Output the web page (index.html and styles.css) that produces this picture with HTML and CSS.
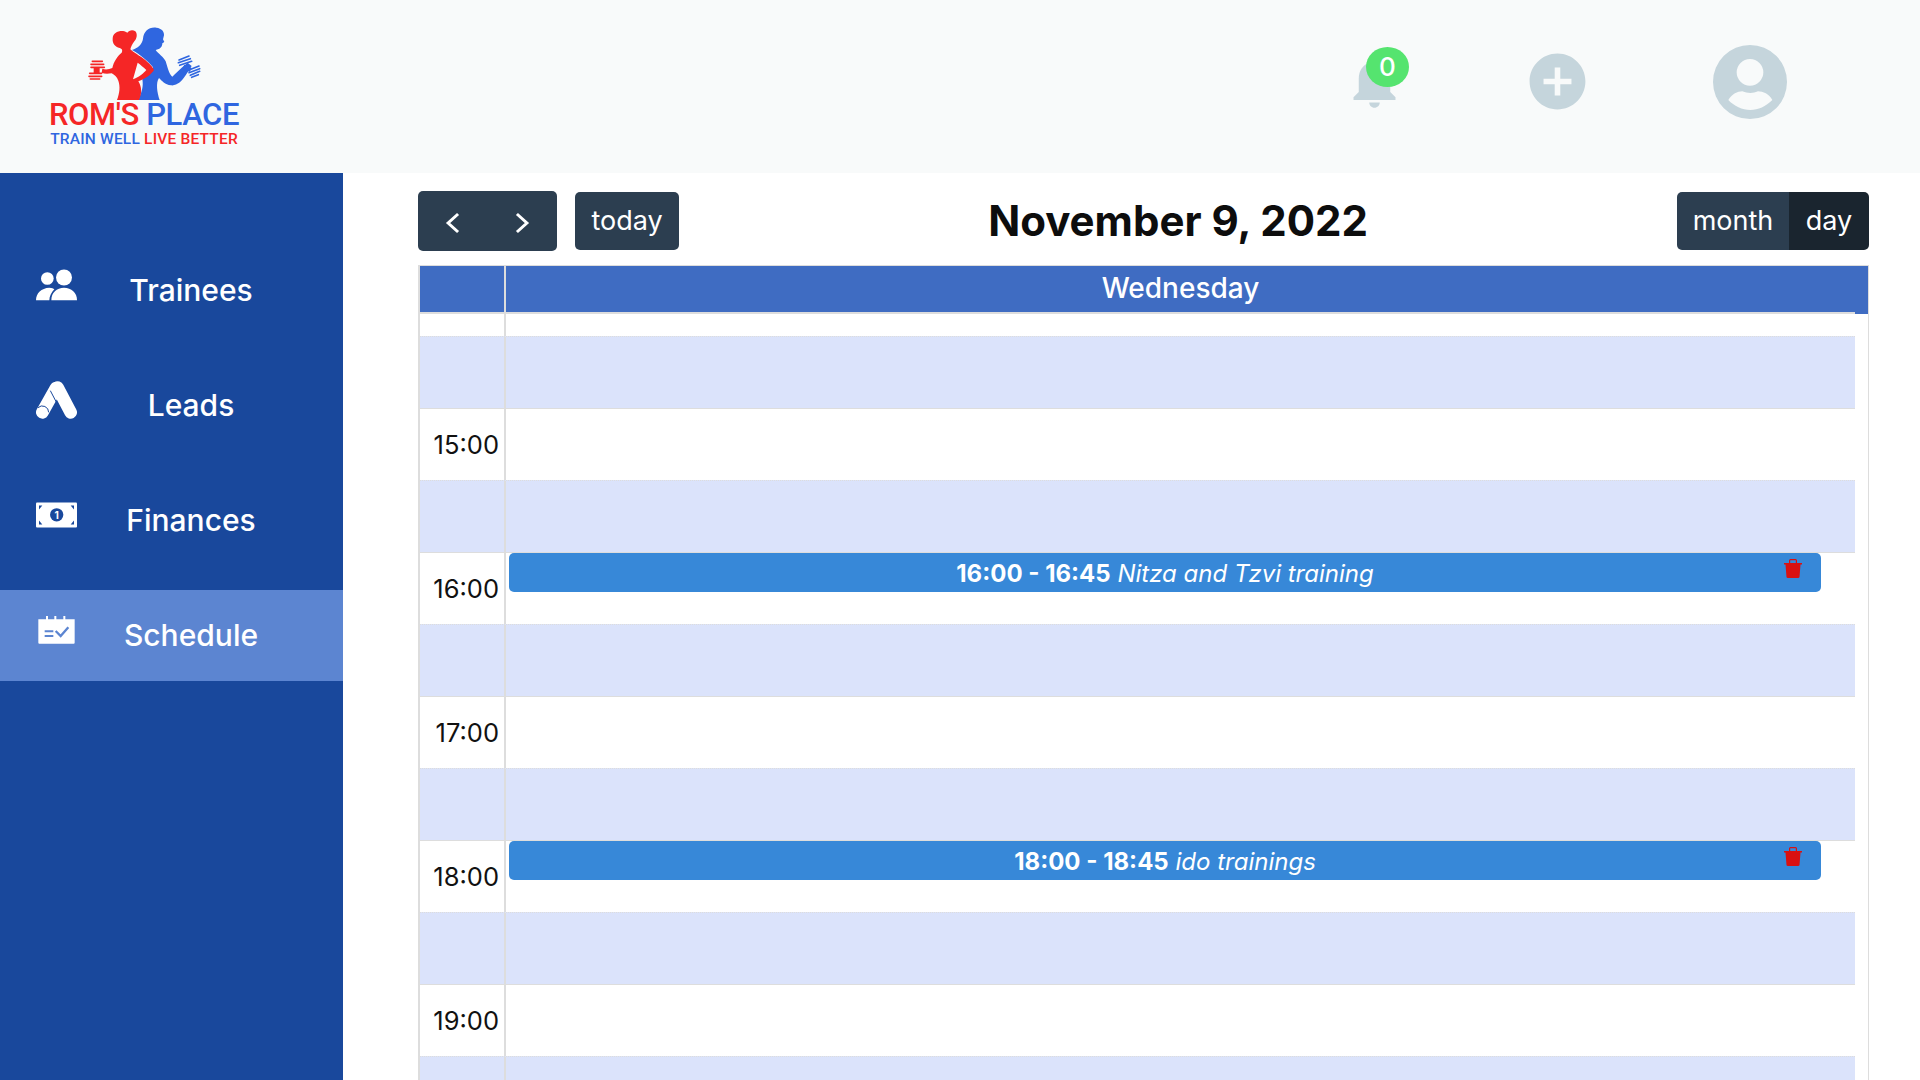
FILE: index.html
```html
<!DOCTYPE html>
<html lang="en">
<head>
    <meta charset="UTF-8">
    <title>Schedule</title>
    <link rel="stylesheet" href="styles.css">
</head>
<body>
    <header class="topbar">
        <div class="logo">
            <svg class="logo-figures" viewBox="260 80 345 225">
                <g fill="#2f66e0">
                    <path d="M395 152C412 146 425 136 428 118C430 96 446 82 468 85C484 87 492 96 491 108L488 120L492 128L486 132C486 142 480 150 466 152C474 164 490 172 496 186C502 206 508 228 516 232C526 222 536 212 544 205L562 190L574 200L556 228C544 246 530 260 512 258C494 256 484 244 476 236C466 250 470 280 478 302H414C424 280 430 262 426 240C440 222 460 216 458 204C444 186 420 166 395 152Z"/>
                    <g stroke="#2f66e0" stroke-width="5" stroke-linecap="round" fill="none">
                        <path d="M536 182L566 170M534 190L570 178M538 198L574 186"/>
                        <path d="M566 212L596 200M566 220L598 208M570 228L598 216M574 234L594 226"/>
                    </g>
                    <path d="M552 196L574 206L568 218L546 208Z"/>
                </g>
                <g fill="#f52626">
                    <path d="M337 118C337 102 352 94 368 95C374 96 378 98 381 100C386 92 398 90 405 96C412 104 410 118 402 126C396 134 392 142 390 150C396 156 412 166 424 174C440 186 456 200 461 212C452 226 436 238 414 246C424 262 426 282 416 302H350C358 280 360 262 354 244C350 232 342 226 334 222C322 224 312 224 304 220L306 208C316 212 326 210 336 206C340 186 352 170 364 160C368 152 364 148 358 146C344 142 336 132 337 118ZM412 190L398 240C414 234 430 222 438 212C430 204 420 196 412 190Z"/>
                    <g stroke="#f52626" stroke-width="5" stroke-linecap="round" fill="none">
                        <path d="M276 186H306M272 195H310M272 204H312"/>
                        <path d="M268 222H304M266 231H304M270 239H298"/>
                    </g>
                    <path d="M280 204H298V224H280Z"/>
                </g>
            </svg>
            <div class="logo-name"><span class="red">ROM'S</span> <span class="blue">PLACE</span></div>
            <div class="logo-slogan"><span class="blue">TRAIN WELL</span> <span class="red">LIVE BETTER</span></div>
        </div>
        <div class="topbar-icons">
            <div class="bell">
                <svg class="icon-bell" viewBox="0 0 24 24"><path d="M12 22c1.1 0 2-.9 2-2h-4c0 1.1.89 2 2 2zm6-6v-5c0-3.07-1.64-5.64-4.5-6.32V4c0-.83-.67-1.5-1.5-1.5s-1.5.67-1.5 1.5v.68C7.63 5.36 6 7.92 6 11v5l-2 2v1h16v-1l-2-2z"/></svg>
                <span class="badge">0</span>
            </div>
            <svg class="icon-add" viewBox="0 0 24 24"><path d="M12 2C6.48 2 2 6.48 2 12s4.48 10 10 10 10-4.48 10-10S17.52 2 12 2zm5 11h-4v4h-2v-4H7v-2h4V7h2v4h4v2z"/></svg>
            <svg class="icon-user" viewBox="1237 75 222 222"><path fill-rule="evenodd" d="M1237 186a111 111 0 1 0 222 0a111 111 0 1 0 -222 0ZM1308 157a40 40 0 1 0 80 0a40 40 0 1 0 -80 0ZM1283 240C1295 222 1310 214 1325 214C1335 217 1340 219 1349 219C1358 219 1363 217 1372 214C1387 214 1405 222 1415 240C1395 260 1373 270 1349 270C1325 270 1300 258 1283 240Z"/></svg>
        </div>
    </header>

    <div class="layout">
        <nav class="sidebar">
            <a class="nav-item">
                <svg class="nav-icon" viewBox="108 85 123 95">
                    <circle cx="142" cy="113" r="19"/>
                    <circle cx="192" cy="110" r="24"/>
                    <path d="M108 178C108 158 124 142 148 141C156 142 160 143 163 145C154 154 148 166 148 178Z"/>
                    <path d="M154 178C154 156 170 141 192 141C214 141 231 156 231 178Z"/>
                </svg>
                <span class="nav-label">Trainees</span>
            </a>
            <a class="nav-item">
                <svg class="nav-icon" viewBox="108 422 123 112">
                    <path d="M168 442L127 515" fill="none" stroke="#fff" stroke-width="38" stroke-linecap="round"/>
                    <path d="M173 441L212 515" fill="none" stroke="#fff" stroke-width="38" stroke-linecap="round"/>
                    <path d="M151 450L174 494" fill="none" stroke="#19489c" stroke-width="3"/>
                    <path d="M114 501A19 19 0 0 1 146 515" fill="none" stroke="#19489c" stroke-width="3"/>
                </svg>
                <span class="nav-label">Leads</span>
            </a>
            <a class="nav-item">
                <svg class="nav-icon" viewBox="108 96 123 75">
                    <rect x="108" y="96" width="123" height="75" rx="3"/>
                    <circle cx="170" cy="133" r="20" fill="#19489c"/>
                    <text class="bill-digit" x="170" y="144">1</text>
                    <path d="M117 105h10l-10 12zM222 105h-10l10 12zM117 162h10l-10-12zM222 162h-10l10-12z" fill="#19489c"/>
                </svg>
                <span class="nav-label">Finances</span>
            </a>
            <a class="nav-item active">
                <svg class="nav-icon icon-schedule" viewBox="108 438 123 84">
                    <path d="M115 448H138V438H144V448H163V438H169V448H190V438H196V448H224V518Q224 521 221 521H118Q115 521 115 518Z"/>
                    <path d="M134 484H160M134 498H160" fill="none" stroke="#5c85d1" stroke-width="6"/>
                    <path d="M167 483L182 498L205 472" fill="none" stroke="#5c85d1" stroke-width="7"/>
                </svg>
                <span class="nav-label">Schedule</span>
            </a>
        </nav>

        <main class="content">
            <div class="toolbar">
                <div class="toolbar-left">
                    <div class="nav-buttons">
                        <button class="btn btn-arrow"><svg viewBox="0 0 16 16"><path d="M10.7 3.2L5.4 8l5.3 4.8"/></svg></button>
                        <button class="btn btn-arrow"><svg viewBox="0 0 16 16"><path d="M5.3 3.2L10.6 8l-5.3 4.8"/></svg></button>
                    </div>
                    <button class="btn btn-today">today</button>
                </div>
                <h2 class="cal-title">November 9, 2022</h2>
                <div class="view-switch">
                    <button class="btn btn-month">month</button>
                    <button class="btn btn-day">day</button>
                </div>
            </div>

            <div class="calendar">
                <div class="cal-head">
                    <div class="head-axis"></div>
                    <div class="head-day">Wednesday</div>
                    <div class="head-gutter"></div>
                </div>
                <div class="cal-body">
                    <div class="row row-top"><div class="axis"></div><div class="slot"></div></div>
                    <div class="row half"><div class="axis"></div><div class="slot"></div></div>
                    <div class="row"><div class="axis">15:00</div><div class="slot"></div></div>
                    <div class="row half"><div class="axis"></div><div class="slot"></div></div>
                    <div class="row">
                        <div class="axis">16:00</div>
                        <div class="slot">
                            <div class="event">
                                <span class="event-text"><b>16:00 - 16:45</b> <i>Nitza and Tzvi training</i></span>
                                <svg class="trash" viewBox="0 0 18 19"><path d="M0 4h5V1.5Q5 0 6.5 0h5Q13 0 13 1.5V4h5v1.5h-1.5L15.500 18Q15.400 19 14 19H4Q2.600 19 2.500 18L1.500 5.500H0zM6.200 4h5.600V1.300H6.200z"/></svg>
                            </div>
                        </div>
                    </div>
                    <div class="row half"><div class="axis"></div><div class="slot"></div></div>
                    <div class="row"><div class="axis">17:00</div><div class="slot"></div></div>
                    <div class="row half"><div class="axis"></div><div class="slot"></div></div>
                    <div class="row">
                        <div class="axis">18:00</div>
                        <div class="slot">
                            <div class="event">
                                <span class="event-text"><b>18:00 - 18:45</b> <i>ido trainings</i></span>
                                <svg class="trash" viewBox="0 0 18 19"><path d="M0 4h5V1.5Q5 0 6.5 0h5Q13 0 13 1.5V4h5v1.5h-1.5L15.500 18Q15.400 19 14 19H4Q2.600 19 2.500 18L1.500 5.500H0zM6.200 4h5.600V1.300H6.200z"/></svg>
                            </div>
                        </div>
                    </div>
                    <div class="row half"><div class="axis"></div><div class="slot"></div></div>
                    <div class="row"><div class="axis">19:00</div><div class="slot"></div></div>
                    <div class="row half"><div class="axis"></div><div class="slot"></div></div>
                </div>
            </div>
        </main>
    </div>
</body>
</html>
```

FILE: styles.css
```css
* {
    box-sizing: border-box;
}

body {
    font-family: "Inter", "Open Sans", sans-serif;
    margin: 0;
    height: 100vh;
    overflow: hidden;
    background-color: #fff;
}

.topbar {
    height: 173px;
    background-color: #f8fafa;
    display: flex;
    justify-content: space-between;
    align-items: center;
    padding: 0 133px 0 47px;
}

/* logo */
.logo {
    width: 194px;
    display: flex;
    flex-direction: column;
    align-items: center;
    font-family: "Roboto", sans-serif;
    font-weight: 500;
    white-space: nowrap;
}

.logo-figures {
    width: 115px;
    height: 75px;
    display: block;
}

.logo-name {
    font-size: 31px;
    line-height: 26px;
    margin-top: 1px;
    letter-spacing: -0.4px;
}

.logo-slogan {
    font-size: 15.5px;
    line-height: 16px;
    margin-top: 3px;
    letter-spacing: 0.2px;
}

.red {
    color: #f52626;
}

.blue {
    color: #2f66e0;
}

.topbar-icons {
    display: flex;
    align-items: center;
    margin-bottom: 11px;
}

.topbar-icons svg {
    fill: #c5d5dc;
    display: block;
}

.bell {
    position: relative;
}

.icon-bell {
    width: 63px;
    height: 63px;
}

.badge {
    position: absolute;
    left: 23px;
    top: -3px;
    width: 43px;
    height: 40px;
    border-radius: 50%;
    background-color: #55e46f;
    color: #fff;
    font-size: 26px;
    font-weight: 500;
    line-height: 40px;
    text-align: center;
}

.icon-add {
    width: 67px;
    height: 67px;
    margin-left: 118px;
}

.icon-user {
    width: 74px;
    height: 74px;
    margin-left: 122px;
    margin-top: 2px;
}

/* sidebar */
.layout {
    display: flex;
    height: 907px;
}

.sidebar {
    width: 343px;
    flex-shrink: 0;
    background-color: #19489c;
    padding-top: 72px;
    display: flex;
    flex-direction: column;
    gap: 24px;
}

.nav-item {
    height: 91px;
    display: flex;
    align-items: center;
    padding: 0 38px 0 36px;
    color: #fff;
}

.nav-item.active {
    background-color: #5c85d1;
}

.nav-icon {
    width: 41px;
    height: 38px;
    fill: #fff;
    margin-bottom: 12px;
    flex-shrink: 0;
}

.bill-digit {
    fill: #fff;
    font-size: 30px;
    font-weight: 700;
    text-anchor: middle;
}

.nav-label {
    flex: 1;
    text-align: center;
    font-size: 30px;
    font-weight: 500;
    padding-bottom: 2px;
}

/* calendar */
.content {
    flex: 1;
    padding: 18px 51px 0 75px;
    overflow: hidden;
}

.toolbar {
    height: 60px;
    display: flex;
    justify-content: space-between;
    align-items: center;
    margin-bottom: 14px;
}

.toolbar-left {
    display: flex;
    align-items: center;
    gap: 18px;
}

.btn {
    font-family: inherit;
    height: 58px;
    border: none;
    color: #fff;
    background-color: #2c3e50;
    font-size: 27px;
    padding: 0 0 2px;
}

.nav-buttons {
    display: flex;
    border-radius: 5px;
    overflow: hidden;
}

.btn-arrow {
    width: 69.5px;
    height: 60px;
    padding: 0;
}

.btn-arrow svg {
    width: 30px;
    height: 30px;
    fill: none;
    stroke: #fff;
    stroke-width: 1.6;
    vertical-align: middle;
}

.btn-today {
    width: 104px;
    border-radius: 5px;
}

.cal-title {
    margin: 0 0 2px;
    font-size: 42px;
    font-weight: 700;
    color: #0d0d0d;
}

.view-switch {
    display: flex;
    border-radius: 5px;
    overflow: hidden;
}

.btn-month {
    width: 112px;
}

.btn-day {
    width: 80px;
    background-color: #1a252f;
}

.calendar {
    border-left: 2px solid #ddd;
    border-right: 1px solid #ddd;
    border-top: 1px solid #ddd;
}

.cal-head {
    height: 48px;
    display: flex;
    background-color: #3f6cc2;
    color: #fff;
}

.head-axis {
    width: 86px;
    border-right: 2px solid #ddd;
    border-bottom: 2px solid #ddd;
    flex-shrink: 0;
}

.head-day {
    flex: 1;
    text-align: center;
    font-size: 28px;
    font-weight: 500;
    line-height: 45px;
    border-bottom: 2px solid #ddd;
}

.head-gutter {
    width: 13px;
}

.cal-body {
    padding-right: 13px;
}

.row {
    height: 71px;
    display: flex;
}

.row-top {
    height: 22px;
}

.row.half {
    height: 73px;
    background-color: #dbe3fb;
    border-top: 1px dotted #ddd;
    border-bottom: 1px solid #ddd;
}

.axis {
    width: 86px;
    flex-shrink: 0;
    border-right: 2px solid #ddd;
    text-align: right;
    padding-right: 5px;
    font-size: 25.5px;
    line-height: 71px;
    color: #111;
}

.slot {
    flex: 1;
    position: relative;
}

.event {
    position: absolute;
    left: 3px;
    right: 34px;
    top: 0;
    height: 39px;
    background-color: #3788d8;
    border-radius: 5px;
    color: #fff;
    text-align: center;
    font-size: 24px;
    line-height: 41px;
    white-space: nowrap;
}

.event-text b {
    font-weight: 700;
}

.trash {
    position: absolute;
    right: 19px;
    top: 6px;
    width: 18px;
    height: 19px;
    fill: #d91010;
}
```
